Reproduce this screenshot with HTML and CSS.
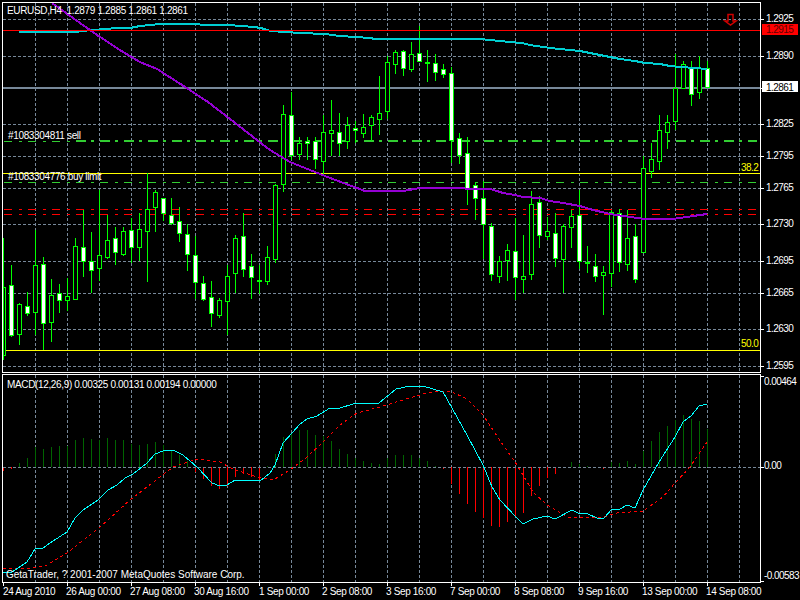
FILE: index.html
```html
<!doctype html>
<html lang="en">
<head>
  <meta charset="utf-8">
  <title>EURUSD,H4</title>
  <link rel="stylesheet" href="styles.css">
</head>
<body>
  <main class="terminal">
    <!-- price window, coordinates are screen pixels -->
    <svg class="panel panel-price" viewBox="0 0 800 373" aria-label="EURUSD H4 candles">
      <path class="grid" d="M35.5 3V372M67.5 3V372M99.5 3V372M131.5 3V372M163.5 3V372M195.5 3V372M227.5 3V372M259.5 3V372M291.5 3V372M323.5 3V372M355.5 3V372M387.5 3V372M419.5 3V372M451.5 3V372M483.5 3V372M515.5 3V372M547.5 3V372M579.5 3V372M611.5 3V372M643.5 3V372M675.5 3V372M707.5 3V372M739.5 3V372"/>
      <path class="grid" d="M3 19.5H760M3 56.5H760M3 124.5H760M3 156.5H760M3 188.5H760M3 224.5H760M3 261.5H760M3 293.5H760M3 329.5H760M3 366.5H760"/>
      <path class="bid-line" d="M3 88H760"/>
      <path class="fibo" d="M3 173.5H760M3 350.5H760"/>
      <path class="order order-limit" d="M4 141.5H76"/>
      <path class="order order-sell" d="M76 141H757"/>
      <path class="order order-limit" d="M4 182.5H757"/>
      <path class="order order-stop" d="M4 209.5H757M4 214.5H757"/>

      <path class="wick" d="M3.5 238V360M11.5 265V337M19.5 303V345M27.5 292V316M35.5 230V335M43.5 257V350M51.5 279V342M59.5 284V313M67.5 278V311M75.5 238V300M83.5 210V277M91.5 232V293M99.5 190V281M107.5 215V259M115.5 227V265M123.5 227V256M131.5 218V263M139.5 213V261M147.5 173V282M155.5 190V232M163.5 198V221M171.5 198V225M179.5 207V242M187.5 224V271M195.5 236V299M203.5 276V301M211.5 281V327M219.5 298V318M227.5 265V335M235.5 235V293M243.5 213V277M251.5 254V299M259.5 265V294M267.5 246V285M275.5 184V263M283.5 105V192M291.5 92V160M299.5 137V160M307.5 137V160M315.5 137V169M323.5 115V176M331.5 100V156M339.5 113V156M347.5 117V149M355.5 121V143M363.5 114V138M371.5 115V141M379.5 76V135M387.5 56V119M395.5 50V74M403.5 50V76M411.5 42V72M419.5 26V62M427.5 50V82M435.5 54V81M443.5 64V78M451.5 67V163M459.5 133V164M467.5 137V205M475.5 182V220M483.5 181V259M491.5 223V281M499.5 256V283M507.5 244V281M515.5 218V300M523.5 235V293M531.5 191V280M539.5 196V248M547.5 217V240M555.5 213V267M563.5 224V293M571.5 210V248M579.5 190V269M587.5 246V273M595.5 254V282M603.5 266V315M611.5 210V287M619.5 209V272M627.5 210V271M635.5 224V283M643.5 156V252M651.5 143V178M659.5 115V170M667.5 115V149M675.5 54V130M683.5 61V89M691.5 61V106M699.5 56V99M707.5 61V87"/>
      <!-- rising candles are hollow -->
      <path class="body body-up" d="M3.5 287.5h2V355.5h-2zM17.5 304.5h4V334.5h-4zM33.5 265.5h4V312.5h-4zM49.5 295.5h4V322.5h-4zM65.5 296.5h4V300.5h-4zM73.5 246.5h4V299.5h-4zM97.5 255.5h4V268.5h-4zM105.5 240.5h4V257.5h-4zM121.5 231.5h4V254.5h-4zM137.5 229.5h4V247.5h-4zM145.5 209.5h4V231.5h-4zM153.5 192.5h4V207.5h-4zM217.5 300.5h4V315.5h-4zM225.5 276.5h4V301.5h-4zM233.5 238.5h4V273.5h-4zM265.5 257.5h4V281.5h-4zM273.5 185.5h4V259.5h-4zM281.5 114.5h4V184.5h-4zM297.5 143.5h4V154.5h-4zM321.5 132.5h4V161.5h-4zM329.5 130.5h4V133.5h-4zM345.5 125.5h4V141.5h-4zM361.5 127.5h4V133.5h-4zM369.5 117.5h4V125.5h-4zM377.5 113.5h4V119.5h-4zM385.5 62.5h4V111.5h-4zM393.5 52.5h4V64.5h-4zM409.5 54.5h4V69.5h-4zM497.5 261.5h4V276.5h-4zM505.5 250.5h4V260.5h-4zM521.5 276.5h4V279.5h-4zM529.5 204.5h4V274.5h-4zM545.5 231.5h4V236.5h-4zM561.5 226.5h4V259.5h-4zM569.5 216.5h4V227.5h-4zM601.5 272.5h4V275.5h-4zM609.5 212.5h4V273.5h-4zM625.5 238.5h4V264.5h-4zM641.5 168.5h4V252.5h-4zM649.5 159.5h4V171.5h-4zM657.5 130.5h4V161.5h-4zM665.5 122.5h4V132.5h-4zM673.5 88.5h4V121.5h-4zM681.5 64.5h4V88.5h-4zM697.5 68.5h4V92.5h-4z"/>
      <path class="body body-down" d="M9.5 285.5h4V335.5h-4zM25.5 306.5h4V313.5h-4zM41.5 264.5h4V323.5h-4zM57.5 293.5h4V300.5h-4zM81.5 247.5h4V261.5h-4zM89.5 261.5h4V270.5h-4zM113.5 238.5h4V252.5h-4zM129.5 230.5h4V247.5h-4zM161.5 198.5h4V213.5h-4zM169.5 215.5h4V223.5h-4zM177.5 221.5h4V233.5h-4zM185.5 234.5h4V254.5h-4zM193.5 255.5h4V282.5h-4zM201.5 283.5h4V299.5h-4zM209.5 297.5h4V313.5h-4zM241.5 236.5h4V269.5h-4zM249.5 266.5h4V277.5h-4zM257.5 280.5h4V281.5h-4zM289.5 115.5h4V155.5h-4zM305.5 141.5h4V143.5h-4zM313.5 141.5h4V159.5h-4zM337.5 132.5h4V143.5h-4zM353.5 128.5h4V130.5h-4zM401.5 51.5h4V68.5h-4zM417.5 53.5h4V61.5h-4zM425.5 62.5h4V63.5h-4zM433.5 63.5h4V72.5h-4zM441.5 69.5h4V74.5h-4zM449.5 73.5h4V140.5h-4zM457.5 138.5h4V155.5h-4zM465.5 153.5h4V188.5h-4zM473.5 185.5h4V198.5h-4zM481.5 198.5h4V224.5h-4zM489.5 226.5h4V274.5h-4zM513.5 251.5h4V277.5h-4zM537.5 202.5h4V235.5h-4zM553.5 233.5h4V258.5h-4zM577.5 215.5h4V261.5h-4zM585.5 262.5h4V263.5h-4zM593.5 266.5h4V276.5h-4zM617.5 213.5h4V262.5h-4zM633.5 236.5h4V279.5h-4zM689.5 67.5h4V94.5h-4zM705.5 68.5h4V87.5h-4z"/>

      <polyline class="ma ma-slow" points="19,32 75,32 91,30 107,29 116,28 130,28 140,26 150,25 160,24 195,24 205,25 230,25 240,26 255,27 265,29 270,31 285,32 300,33 325,34 340,36 355,37 370,38 375,39 480,39 490,40 500,41 510,42 522,43 530,45 550,48 570,50 580,51 590,53 600,55 610,57 620,59 635,61 645,63 660,64 670,66 680,67 695,68 707,69"/>
      <polyline class="ma ma-fast" points="52,3 80,23 97,35 123,52 140,62 157,69 182,85 208,102 230,119 257,140 270,150 290,162 310,170 330,178 357,188 365,191 403,191 420,188 440,188 490,189 497,191 503,193 515,195 523,197 540,198 550,201 563,203 580,206 593,210 610,214 630,217 645,219 673,219 693,216 707,214"/>
      <path class="ask-line" d="M3 30.5H760"/>

      <path class="arrow" d="M728 14.5h5V21h3L730.5 25 725 21h3z"/>

      <text class="label" x="7" y="14">EURUSD,H4  1.2879 1.2885 1.2861 1.2861</text>
      <text class="label" x="8" y="139">#1083304811 sell</text>
      <text class="label" x="8" y="180">#1083304776 buy limit</text>
      <text class="label label-num label-fibo" x="741" y="171">38.2</text>
      <text class="label label-num label-fibo" x="741" y="347">50.0</text>

      <path class="frame" d="M2.5 373V2.5H760.5V373M2 372.5H761"/>
      <path class="frame" d="M761 19.5h3M761 56.5h3M761 88.5h3M761 124.5h3M761 156.5h3M761 188.5h3M761 224.5h3M761 261.5h3M761 293.5h3M761 329.5h3M761 366.5h3"/>
      <text class="label label-num" x="766" y="22">1.2925</text>
      <rect class="tag tag-ask" x="762" y="24" width="36" height="11"/>
      <text class="label label-num label-ask" x="766" y="33">1.2915</text>
      <text class="label label-num" x="766" y="59">1.2890</text>
      <rect class="tag" x="762" y="81" width="36" height="11"/>
      <text class="label label-num label-dark" x="766" y="91">1.2861</text>
      <text class="label label-num" x="766" y="127">1.2825</text>
      <text class="label label-num" x="766" y="159">1.2795</text>
      <text class="label label-num" x="766" y="191">1.2765</text>
      <text class="label label-num" x="766" y="227">1.2730</text>
      <text class="label label-num" x="766" y="264">1.2695</text>
      <text class="label label-num" x="766" y="296">1.2665</text>
      <text class="label label-num" x="766" y="332">1.2630</text>
      <text class="label label-num" x="766" y="369">1.2595</text>
    </svg>

    <!-- MACD sub window, same screen coordinates -->
    <svg class="panel panel-macd" viewBox="0 373 800 227" aria-label="MACD">
      <path class="grid" d="M35.5 375V582M67.5 375V582M99.5 375V582M131.5 375V582M163.5 375V582M195.5 375V582M227.5 375V582M259.5 375V582M291.5 375V582M323.5 375V582M355.5 375V582M387.5 375V582M419.5 375V582M451.5 375V582M483.5 375V582M515.5 375V582M547.5 375V582M579.5 375V582M611.5 375V582M643.5 375V582M675.5 375V582M707.5 375V582M739.5 375V582"/>
      <path class="bar bar-up" d="M19.5 467V463M27.5 467V458M35.5 467V447M43.5 467V449M51.5 467V447M59.5 467V446M67.5 467V446M75.5 467V440M83.5 467V438M91.5 467V439M99.5 467V440M107.5 467V438M115.5 467V440M123.5 467V440M131.5 467V444M139.5 467V445M147.5 467V444M155.5 467V442M163.5 467V445M171.5 467V451M179.5 467V455M187.5 467V461M267.5 467V466M275.5 467V454M283.5 467V437M291.5 467V433M299.5 467V430M307.5 467V430M315.5 467V435M323.5 467V436M331.5 467V441M339.5 467V449M347.5 467V454M355.5 467V458M363.5 467V461M371.5 467V463M379.5 467V464M387.5 467V458M395.5 467V455M403.5 467V455M411.5 467V455M419.5 467V458M427.5 467V461M435.5 467V466M571.5 467V462M579.5 467V464M587.5 467V466M611.5 467V462M619.5 467V463M627.5 467V461M635.5 467V464M643.5 467V451M651.5 467V441M659.5 467V432M667.5 467V426M675.5 467V420M683.5 467V415M691.5 467V419M699.5 467V421M707.5 467V429"/>
      <path class="bar bar-down" d="M3.5 467V471M11.5 467V469M195.5 467V472M203.5 467V479M211.5 467V486M219.5 467V489M227.5 467V486M235.5 467V477M243.5 467V474M251.5 467V477M259.5 467V480M443.5 467V469M451.5 467V484M459.5 467V494M467.5 467V504M475.5 467V512M483.5 467V518M491.5 467V526M499.5 467V527M507.5 467V522M515.5 467V517M523.5 467V513M531.5 467V496M539.5 467V486M547.5 467V478M555.5 467V474M603.5 467V469"/>
      <path class="grid" d="M3 467.5H760"/>
      <polyline class="signal" points="3,568 13,569 33,568 47,565 67,553 100,527 130,500 173,467 197,459 220,462 233,469 257,477 273,480 290,470 307,457 323,442 340,425 357,413 380,407 403,400 423,394 437,391 450,391 467,399 483,415 503,445 517,465 533,492 547,505 567,517 580,518 603,517 617,513 643,511 663,497 675,483 690,467 707,442"/>
      <polyline class="macd" points="3,572 12,572 27,562 35,549 43,548 50,543 67,532 75,518 83,510 98,500 108,490 117,485 125,478 133,474 147,463 155,454 163,451 173,450 183,455 197,467 212,483 220,486 227,485 235,480 247,480 260,481 270,473 275,465 283,443 292,433 300,424 307,419 317,416 330,408 340,408 353,404 379,403 396,389 410,386 423,386 433,389 443,392 452,408 467,435 483,465 492,487 500,500 517,518 523,524 533,519 547,516 555,519 572,510 578,513 588,514 597,518 604,518 612,509 620,509 627,505 635,508 643,490 659,462 675,437 683,422 691,416 699,406 707,404"/>

      <text class="label" x="7" y="388">MACD(12,26,9) 0.00325 0.00131 0.00194 0.00000</text>
      <text class="label label-wide" x="6" y="578">GetaTrader, ? 2001-2007 MetaQuotes Software Corp.</text>

      <path class="frame" d="M2.5 374V374.5H760.5V582.5H2.5V374.5"/>
      <path class="frame" d="M761 376.5h3M761 467.5h3M761 581.5h3M3.5 583v3M67.5 583v3M131.5 583v3M195.5 583v3M259.5 583v3M323.5 583v3M387.5 583v3M451.5 583v3M515.5 583v3M579.5 583v3M643.5 583v3M707.5 583v3"/>
      <text class="label label-num" x="764" y="385">0.00464</text>
      <text class="label label-num" x="764" y="469">0.00</text>
      <text class="label label-num" x="764" y="579">-0.00583</text>

      <text class="label" x="3" y="595">24 Aug 2010</text>
      <text class="label" x="66" y="595">26 Aug 00:00</text>
      <text class="label" x="130" y="595">27 Aug 08:00</text>
      <text class="label" x="194" y="595">30 Aug 16:00</text>
      <text class="label" x="259" y="595">1 Sep 00:00</text>
      <text class="label" x="322" y="595">2 Sep 08:00</text>
      <text class="label" x="386" y="595">3 Sep 16:00</text>
      <text class="label" x="450" y="595">7 Sep 00:00</text>
      <text class="label" x="514" y="595">8 Sep 08:00</text>
      <text class="label" x="578" y="595">9 Sep 16:00</text>
      <text class="label" x="642" y="595">13 Sep 00:00</text>
      <text class="label" x="706" y="595">14 Sep 08:00</text>
    </svg>
  </main>
</body>
</html>
```

FILE: styles.css
```css
:root{ --grid:#778899; --candle:#00ff00; --frame:#ffffff; }
*{box-sizing:border-box;}
html,body{ margin:0; padding:0; background:#000; }
.terminal{ display:flex; flex-direction:column; width:800px; height:600px; background:#000; overflow:hidden; }
.panel{ display:block; width:800px; flex:none; shape-rendering:crispEdges; }
.panel-price{ height:373px; }
.panel-macd{ height:227px; }

.grid{ fill:none; stroke:var(--grid); stroke-width:1; stroke-dasharray:3 2; }
.bid-line{ fill:none; stroke:var(--grid); stroke-width:2; }
.ask-line{ fill:none; stroke:#ff0000; stroke-width:1; }
.fibo{ fill:none; stroke:#ffff00; stroke-width:1; }
.frame{ fill:none; stroke:var(--frame); stroke-width:1; }

.order{ fill:none; }
.order-sell{ stroke:#32cd32; stroke-width:2; stroke-dasharray:10 5 3 6; }
.order-limit{ stroke:#32cd32; stroke-width:1; stroke-dasharray:8 7 3 6; }
.order-stop{ stroke:#ff0000; stroke-width:1; stroke-dasharray:8 7 3 6; }

.wick{ fill:none; stroke:var(--candle); stroke-width:1; }
.body{ stroke:var(--candle); stroke-width:1; }
.body-up{ fill:#000; }
.body-down{ fill:#fff; }

.ma{ fill:none; stroke-width:2; }
.ma-slow{ stroke:#00ced1; }
.ma-fast{ stroke:#9400d3; }
.arrow{ fill:none; stroke:#d00000; stroke-width:1.5; shape-rendering:auto; }

.bar{ fill:none; stroke-width:1; }
.bar-up{ stroke:#006400; }
.bar-down{ stroke:#ff0000; }
.macd{ fill:none; stroke:#00ffff; stroke-width:1; }
.signal{ fill:none; stroke:#ff0000; stroke-width:1; stroke-dasharray:3 3; }

.tag{ fill:#fff; }
.tag-ask{ fill:#ff0000; }
.label{ font-family:"Liberation Sans",Arial,sans-serif; font-size:10px; letter-spacing:-.35px; fill:#fff; white-space:pre; shape-rendering:auto; }
.label-wide{ letter-spacing:0; }
.label-num{ letter-spacing:-.55px; }
.label-dark{ fill:#000; }
.label-ask{ fill:#600000; }
.label-fibo{ fill:#ffff00; }
```
